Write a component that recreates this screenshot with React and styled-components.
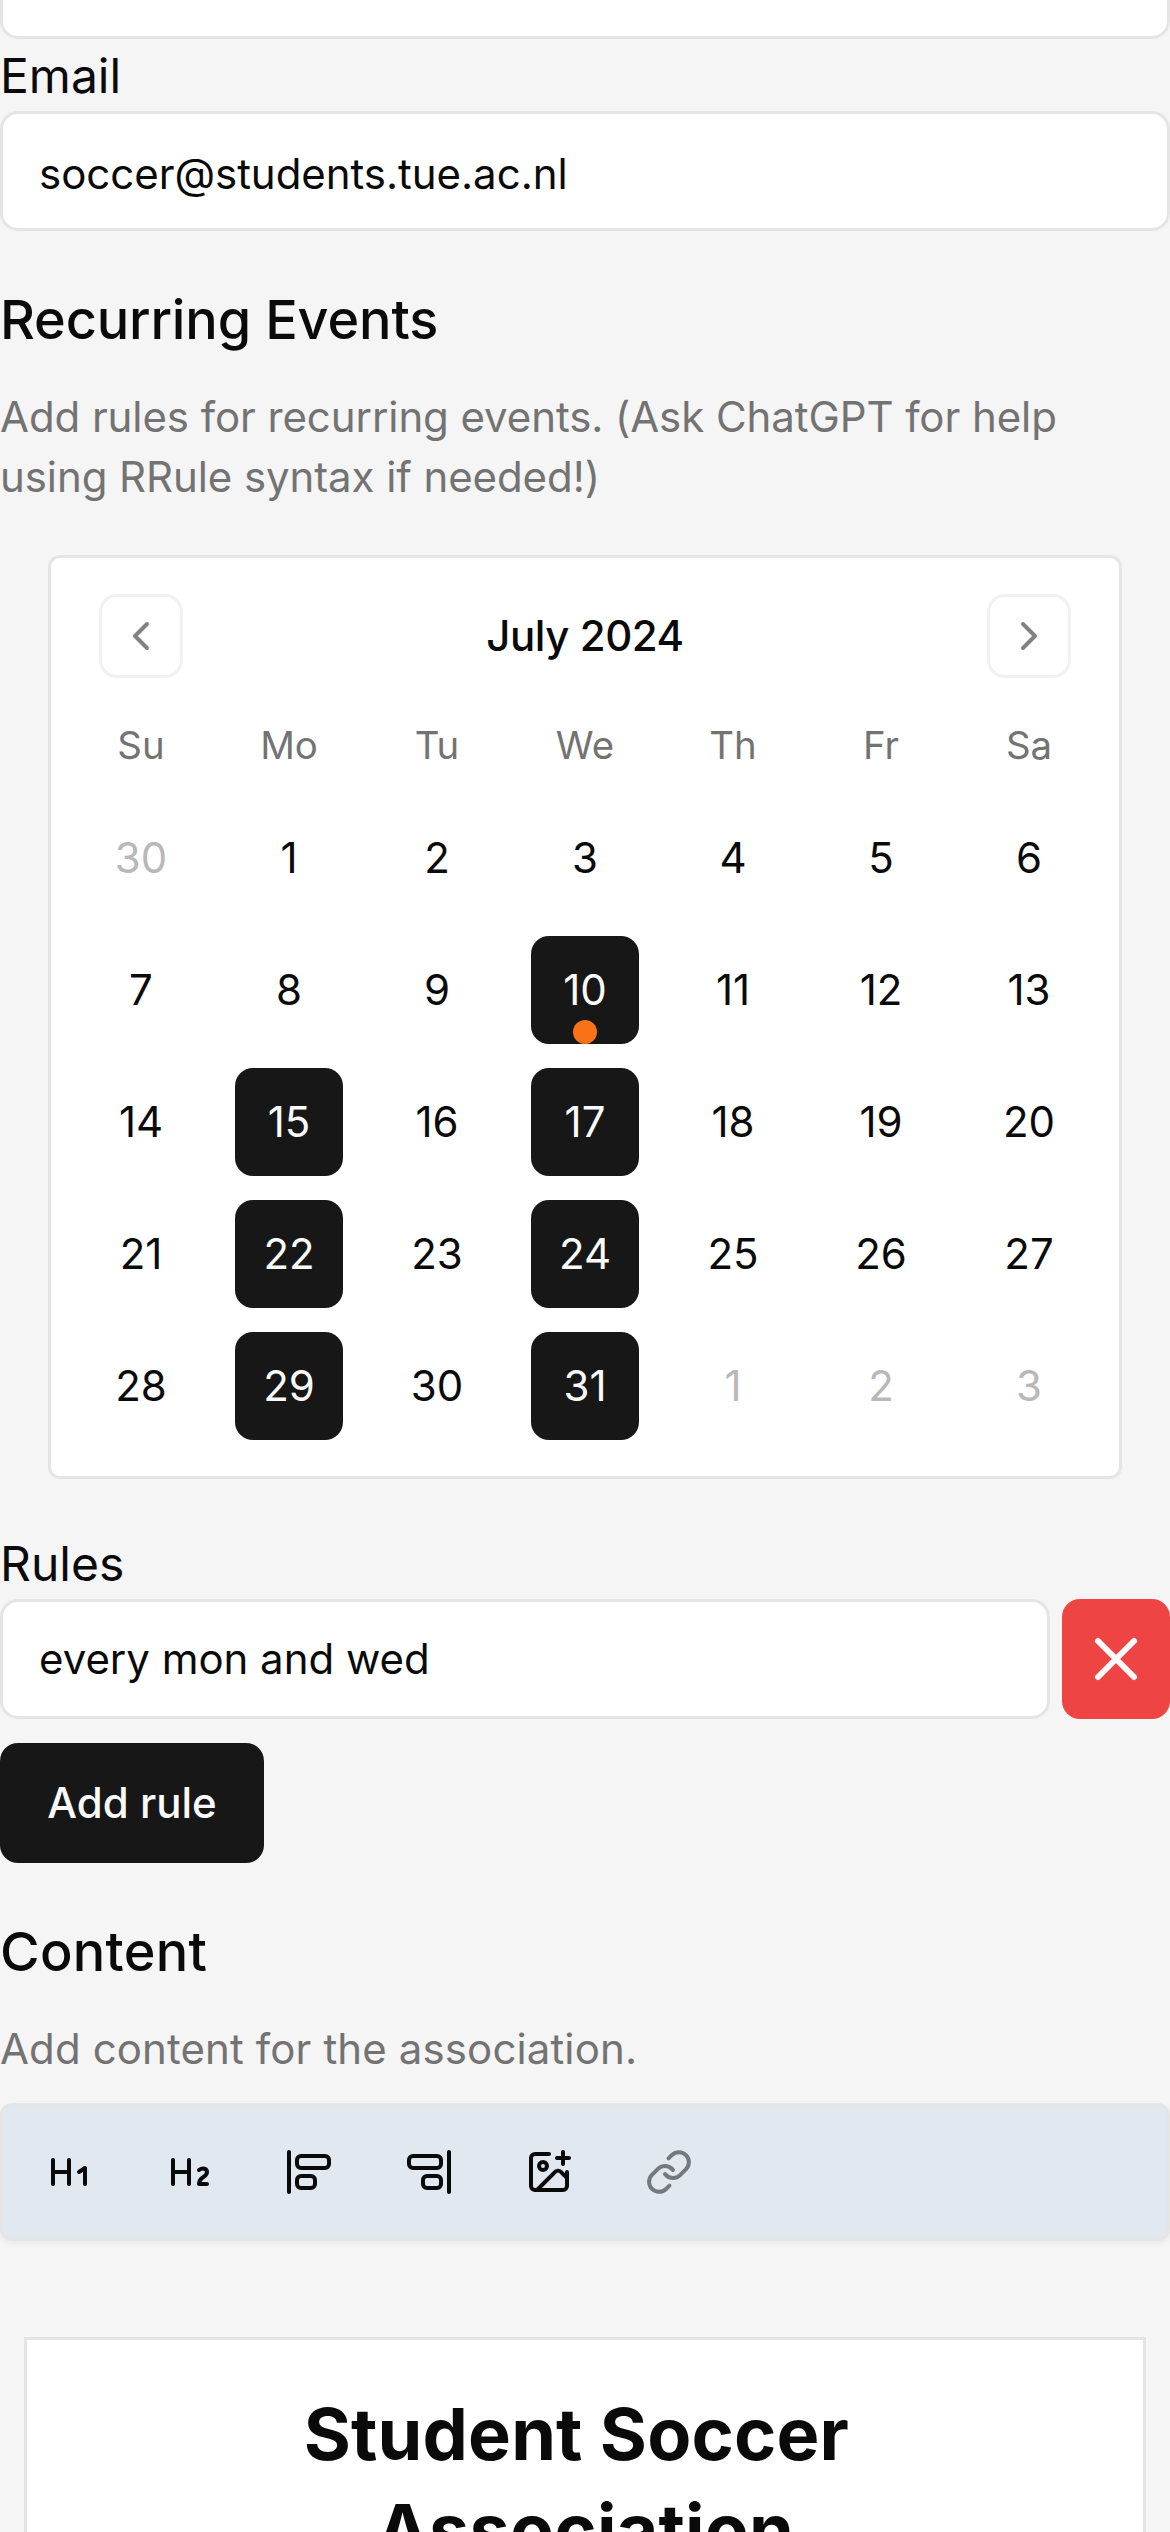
import React from "react";
import styled, { createGlobalStyle } from "styled-components";
import {
  ChevronLeft,
  ChevronRight,
  X,
  Heading1,
  Heading2,
  AlignStartVertical,
  AlignEndVertical,
  Link,
} from "lucide-react";

const GlobalStyle = createGlobalStyle`
  *, *::before, *::after { box-sizing: border-box; }
  html, body {
    margin: 0;
    height: 2532px;
    overflow: hidden;
    background: #f5f5f5;
  }
  body {
    font-family: Inter, "Liberation Sans", sans-serif;
    color: #0a0a0a;
  }
  h2, h1, p { margin: 0; }
  button, input { font-family: inherit; }
  button { cursor: pointer; }
`;

const Page = styled.main`
  width: 1170px;
  height: 2532px;
  overflow: hidden;
  display: flex;
  flex-direction: column;
`;

const Section = styled.section`
  display: flex;
  flex-direction: column;
  padding-top: ${(p) => p.$top ?? 48}px;
`;

const Label = styled.label`
  height: 72px;
  font-size: 48px;
  line-height: 73px;
`;

const Input = styled.input`
  height: 120px;
  min-width: 0;
  flex: ${(p) => (p.$grow ? "1" : "none")};
  padding: ${(p) => (p.type === "email" ? "4px 36px 0" : "0 36px 2px")};
  border: 3px solid #e5e5e5;
  border-radius: 18px;
  background: #fff;
  color: inherit;
  font-size: 42px;
  line-height: 60px;
  letter-spacing: -0.03px;
  outline: none;
`;

const ClippedField = styled.div`
  height: 39px;
  flex: none;
  display: flex;
  flex-direction: column;
  justify-content: flex-end;
  overflow: hidden;
`;

const Heading = styled.h2`
  font-size: 54px;
  font-weight: 500;
  line-height: 81px;
  letter-spacing: ${(p) => p.$tracking}px;
  margin-bottom: 27px;
`;

const Muted = styled.p`
  font-size: 42px;
  line-height: 60px;
  letter-spacing: ${(p) => p.$tracking}px;
  color: #737373;
`;

const Calendar = styled.div`
  margin: 48px 48px 0;
  padding: 36px;
  border: 3px solid #e5e5e5;
  border-radius: 12px;
  background: #fff;
`;

const Caption = styled.div`
  display: flex;
  align-items: center;
  justify-content: space-between;
  height: 84px;
  padding: 0 12px;
  font-size: 42px;
  line-height: 60px;
  font-weight: 500;
  letter-spacing: -0.44px;
`;

const NavButton = styled.button`
  display: grid;
  place-items: center;
  width: 84px;
  height: 84px;
  padding: 0;
  border: 3px solid #e5e5e5;
  border-radius: 18px;
  background: transparent;
  color: #0a0a0a;
  opacity: 0.5;
`;

const Week = styled.div`
  display: flex;
  justify-content: space-between;
  margin-top: ${(p) => p.$top ?? 24}px;
`;

const Weekday = styled.div`
  width: 108px;
  height: 66px;
  font-size: 38.4px;
  line-height: 62px;
  text-align: center;
  color: #737373;
`;

const Day = styled.button`
  position: relative;
  width: 108px;
  height: 108px;
  padding: 0;
  border: 0;
  border-radius: 18px;
  font-size: 42px;
  line-height: 60px;
  text-align: center;
  background: ${(p) => (p.$selected ? "#171717" : "transparent")};
  color: ${(p) => (p.$selected ? "#fafafa" : p.$outside ? "#737373" : "#0a0a0a")};
  opacity: ${(p) => (p.$outside ? 0.5 : 1)};
`;

const TodayDot = styled.span`
  position: absolute;
  left: 42px;
  bottom: 0;
  width: 24px;
  height: 24px;
  border-radius: 50%;
  background: #f97316;
`;

const RuleRow = styled.div`
  display: flex;
  gap: 12px;
`;

const DeleteButton = styled.button`
  display: grid;
  place-items: center;
  width: 108px;
  height: 120px;
  padding: 0;
  border: 0;
  border-radius: 18px;
  background: #ef4444;
  color: #fafafa;
`;

const AddButton = styled.button`
  align-self: flex-start;
  width: 264px;
  height: 120px;
  margin-top: 24px;
  padding: 0;
  border: 0;
  border-radius: 18px;
  background: #171717;
  color: #fafafa;
  font-size: 42px;
  line-height: 60px;
  font-weight: 500;
`;

const Toolbar = styled.div`
  display: flex;
  align-items: center;
  height: 138px;
  margin-top: 24px;
  padding: 0 6px;
  border: 3px solid #e5e5e5;
  border-radius: 12px;
  background: #e2e8f0;
  box-shadow: 0 3px 6px rgba(0, 0, 0, 0.05);
`;

const Tool = styled.button`
  display: grid;
  place-items: center;
  width: 120px;
  height: 120px;
  padding: 0;
  border: 0;
  background: transparent;
  color: #0a0a0a;
  opacity: ${(p) => (p.disabled ? 0.5 : 1)};
`;

const Editor = styled.div`
  height: 420px;
  margin: 96px 24px 0;
  padding: 46px 96px;
  border: 3px solid #e5e5e5;
  background: #fff;
`;

const EditorTitle = styled.h1`
  font-size: 72px;
  font-weight: 700;
  line-height: 96px;
  letter-spacing: 0.16px;
  text-align: center;
  white-space: break-spaces;
`;

function ImagePlus({ size }) {
  return (
    <svg
      width={size}
      height={size}
      viewBox="0 0 24 24"
      fill="none"
      stroke="currentColor"
      strokeWidth="2"
      strokeLinecap="round"
      strokeLinejoin="round"
    >
      <path d="M21 12v7a2 2 0 0 1-2 2H5a2 2 0 0 1-2-2V5a2 2 0 0 1 2-2h7" />
      <path d="M16 5h6M19 2v6" />
      <circle cx="9" cy="9" r="2" />
      <path d="m21 15-3.086-3.086a2 2 0 0 0-2.828 0L6 21" />
    </svg>
  );
}

const weekdays = ["Su", "Mo", "Tu", "We", "Th", "Fr", "Sa"];
const today = 10;
const selected = [10, 15, 17, 22, 24, 29, 31];

const weeks = Array.from({ length: 5 }, (_, w) =>
  Array.from({ length: 7 }, (_, d) => {
    const n = w * 7 + d;
    if (n < 1) return { label: 30, outside: true };
    if (n > 31) return { label: n - 31, outside: true };
    return { label: n, outside: false };
  })
);

const tools = [
  { name: "Heading 1", Icon: Heading1 },
  { name: "Heading 2", Icon: Heading2 },
  { name: "Align left", Icon: AlignStartVertical },
  { name: "Align right", Icon: AlignEndVertical },
  { name: "Add image", Icon: ImagePlus },
  { name: "Link", Icon: Link, disabled: true },
];

export default function App() {
  return (
    <Page>
      <GlobalStyle />
      <ClippedField>
        <Input aria-label="Website" readOnly />
      </ClippedField>
      <Section $top={0}>
        <Label htmlFor="email">Email</Label>
        <Input id="email" type="email" defaultValue="soccer@students.tue.ac.nl" />
      </Section>

      <Section>
        <Heading $tracking={-0.15}>Recurring Events</Heading>
        <Muted $tracking={-0.085}>
          Add rules for recurring events. (Ask ChatGPT for help using RRule
          syntax if needed!)
        </Muted>
        <Calendar>
          <Caption>
            <NavButton aria-label="Previous month">
              <ChevronLeft size={48} />
            </NavButton>
            <span>July 2024</span>
            <NavButton aria-label="Next month">
              <ChevronRight size={48} />
            </NavButton>
          </Caption>
          <Week $top={36}>
            {weekdays.map((name) => (
              <Weekday key={name}>{name}</Weekday>
            ))}
          </Week>
          {weeks.map((days, i) => (
            <Week key={i}>
              {days.map(({ label, outside }) => (
                <Day
                  key={label}
                  $outside={outside}
                  $selected={!outside && selected.includes(label)}
                >
                  {label}
                  {!outside && label === today && <TodayDot />}
                </Day>
              ))}
            </Week>
          ))}
        </Calendar>
      </Section>

      <Section>
        <Label htmlFor="rule">Rules</Label>
        <RuleRow>
          <Input id="rule" $grow defaultValue="every mon and wed" />
          <DeleteButton aria-label="Delete rule">
            <X size={72} />
          </DeleteButton>
        </RuleRow>
        <AddButton>Add rule</AddButton>
      </Section>

      <Section>
        <Heading $tracking={0.3}>Content</Heading>
        <Muted $tracking={0.12}>Add content for the association.</Muted>
        <Toolbar>
          {tools.map(({ name, Icon, disabled }) => (
            <Tool key={name} aria-label={name} disabled={disabled}>
              <Icon size={48} />
            </Tool>
          ))}
        </Toolbar>
        <Editor>
          <EditorTitle>Student Soccer Association</EditorTitle>
        </Editor>
      </Section>
    </Page>
  );
}
